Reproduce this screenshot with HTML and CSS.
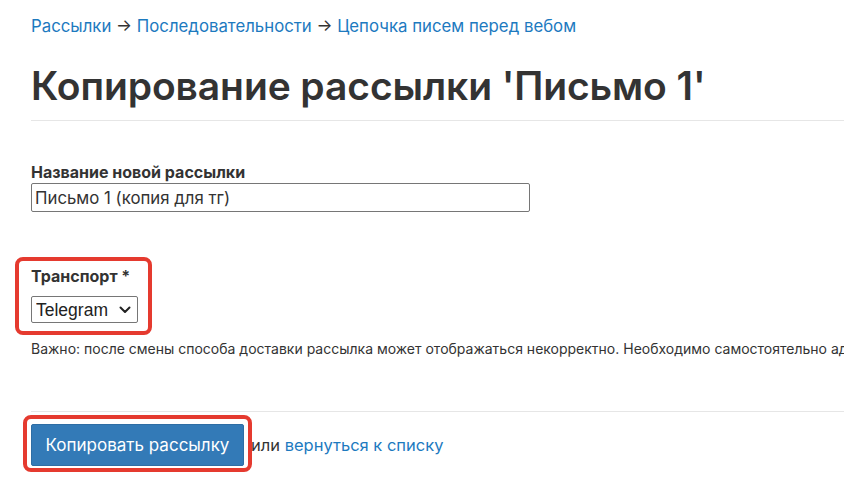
FILE: index.html
```html
<!DOCTYPE html>
<html lang="ru">
<head>
<meta charset="utf-8">
<title>Копирование рассылки</title>
<link rel="stylesheet" href="styles.css">
</head>
<body>
<div class="page">
  <nav class="crumbs">
    <a href="#">Рассылки</a> → <a href="#">Последовательности</a> → <a href="#">Цепочка писем перед вебом</a>
  </nav>
  <h1 class="title">Копирование рассылки 'Письмо 1'</h1>
  <hr class="rule rule-top">
  <form class="form">
    <div class="field">
      <label class="label" for="name">Название новой рассылки</label>
      <input class="text-input" id="name" type="text" value="Письмо 1 (копия для тг)">
    </div>
    <div class="field field-transport highlight">
      <label class="label label-transport" for="transport">Транспорт *</label>
      <span class="select-wrap">
        <select class="select" id="transport">
          <option>Telegram</option>
          <option>Email</option>
        </select>
        <svg class="chevron" width="12" height="8" viewBox="0 0 12 8" aria-hidden="true">
          <path d="M1.5 1.5 L6 6 L10.5 1.5" fill="none" stroke="#222" stroke-width="2" stroke-linecap="round" stroke-linejoin="round"/>
        </svg>
      </span>
    </div>
    <p class="note">Важно: после смены способа доставки рассылка может отображаться некорректно. Необходимо самостоятельно адаптировать содержимое рассылки.</p>
    <hr class="rule rule-bottom">
    <div class="actions">
      <span class="btn-wrap highlight-btn"><button class="btn" type="button">Копировать рассылку</button></span>
      <span class="or">или <a href="#">вернуться к списку</a></span>
    </div>
  </form>
</div>
</body>
</html>
```

FILE: styles.css
```css
html, body {
  margin: 0;
  padding: 0;
  background: #fff;
  overflow: hidden;
}

body {
  font-family: Inter, "Noto Sans", sans-serif;
  color: #333;
  width: 844px;
  height: 492px;
}

a {
  color: #1d7abf;
  text-decoration: none;
}

.page {
  padding: 14px 0 0 31px;
}

.crumbs {
  font-size: 16.8px;
  line-height: 24px;
  color: #333;
  white-space: nowrap;
}

.title {
  margin: 24px 0 0;
  font-size: 39px;
  line-height: 48px;
  font-weight: 600;
  letter-spacing: -0.1px;
  color: #333;
  white-space: nowrap;
}

.rule {
  border: 0;
  border-top: 1px solid #e6e6e6;
  height: 0;
  margin: 0;
}

.rule-top {
  margin-top: 10px;
}

.form {
  margin: 0;
}

.field {
  display: flex;
  flex-direction: column;
  align-items: flex-start;
}

.field:first-child {
  margin-top: 41px;
}

.label {
  font-size: 16px;
  line-height: 20px;
  font-weight: 700;
  color: #333;
}

.text-input {
  box-sizing: border-box;
  margin-top: 1px;
  width: 499px;
  height: 29px;
  padding: 2px 3px;
  border: 1px solid #767676;
  border-radius: 2px;
  font-family: Inter, "Noto Sans", sans-serif;
  font-size: 16.8px;
  color: #333;
  background: #fff;
}

.field-transport {
  margin-top: 54px;
  position: relative;
}

.label-transport {
  margin-bottom: 10px;
}

.select-wrap {
  position: relative;
  display: inline-flex;
}

.select {
  -webkit-appearance: none;
  appearance: none;
  box-sizing: border-box;
  width: 107px;
  height: 27px;
  margin: 0;
  padding: 0 0 0 4px;
  font-family: "Liberation Sans", Arial, sans-serif;
  font-size: 17.5px;
  color: #222;
  border: 1px solid #767676;
  border-radius: 2px;
  background: #fff;
}

.chevron {
  position: absolute;
  right: 7px;
  top: 10px;
  pointer-events: none;
}

.highlight::after {
  content: "";
  position: absolute;
  left: -16px;
  top: -9px;
  width: 129px;
  height: 70px;
  border: 4px solid #e53a2f;
  border-radius: 8px;
  pointer-events: none;
}

.note {
  margin: 16px 0 0;
  font-size: 14px;
  line-height: 20px;
  color: #333;
  white-space: nowrap;
}

.rule-bottom {
  margin-top: 52px;
}

.actions {
  margin-top: 12px;
  display: flex;
  align-items: center;
  font-size: 16.5px;
  line-height: 24px;
}

.btn-wrap {
  position: relative;
  display: inline-flex;
}

.highlight-btn::after {
  content: "";
  position: absolute;
  left: -8px;
  top: -9px;
  right: -8px;
  bottom: -6px;
  border: 4px solid #e53a2f;
  border-radius: 8px;
  pointer-events: none;
}

.btn {
  box-sizing: border-box;
  width: 213px;
  height: 42px;
  padding: 0 12px;
  background: #337ab7;
  border: 1px solid #2e6da4;
  border-radius: 2px;
  color: #fff;
  font-family: Inter, "Noto Sans", sans-serif;
  font-size: 17px;
  cursor: pointer;
}

.or {
  margin-left: 7px;
  color: #333;
  white-space: nowrap;
}
```
